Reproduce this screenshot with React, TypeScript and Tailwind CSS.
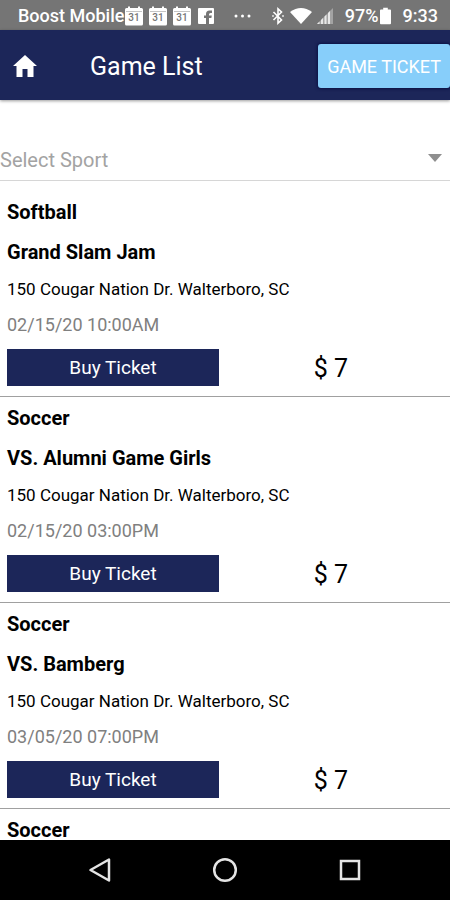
type Game = {
    sport: string;
    name?: string;
    address?: string;
    date?: string;
    price?: number;
};

const games: Game[] = [
    {
        sport: "Softball",
        name: "Grand Slam Jam",
        address: "150 Cougar Nation Dr. Walterboro, SC",
        date: "02/15/20 10:00AM",
        price: 7,
    },
    {
        sport: "Soccer",
        name: "VS. Alumni Game Girls",
        address: "150 Cougar Nation Dr. Walterboro, SC",
        date: "02/15/20 03:00PM",
        price: 7,
    },
    {
        sport: "Soccer",
        name: "VS. Bamberg",
        address: "150 Cougar Nation Dr. Walterboro, SC",
        date: "03/05/20 07:00PM",
        price: 7,
    },
    { sport: "Soccer" },
];

const CalendarIcon = () => (
    <svg width="18" height="20" viewBox="0 0 18 20" aria-hidden="true">
        <path
            fill="#fff"
            d="M1.5 2H3V.5h2V2h8V.5h2V2h1.5Q18 2 18 3.500V18q0 1.500-1.500 1.500h-15Q0 19.500 0 18V3.500Q0 2 1.500 2z"
        />
        <path stroke="#c4c4c4" strokeWidth="1" d="M1 5.500h16" />
        <text x="9" y="15" fontSize="10" textAnchor="middle" fill="#757575">
            31
        </text>
    </svg>
);

const StatusBar = () => (
    <div className="flex h-[30px] shrink-0 items-center bg-[#757575] pl-[18px] pr-3 pt-0.5 text-lg font-medium text-white">
        <span className="whitespace-nowrap">Boost Mobile</span>
        <div className="ml-px flex items-center gap-[6px]">
            <CalendarIcon />
            <CalendarIcon />
            <CalendarIcon />
            <svg className="ml-px" width="16" height="16" viewBox="0 0 16 16" aria-hidden="true">
                <rect width="16" height="16" rx="1" fill="#fff" />
                <path
                    fill="#757575"
                    d="M8 16V10H6V7.500h2V6q0-3.500 3.500-3.500H14V5h-1.500q-1.500 0-1.500 1.500v1h2.800L13.400 10H11v6z"
                />
            </svg>
        </div>
        <div className="ml-auto flex items-center">
            <svg width="18" height="4" viewBox="0 0 18 4" fill="#fff" aria-hidden="true">
                <circle cx="2" cy="2" r="1.500" />
                <circle cx="8.500" cy="2" r="1.500" />
                <circle cx="15" cy="2" r="1.500" />
            </svg>
            <svg
                className="ml-5"
                width="12"
                height="18"
                viewBox="0 0 12 18"
                fill="none"
                stroke="#fff"
                strokeWidth="1.600"
                aria-hidden="true"
            >
                <path d="M1.500 5l8 8L6 16.200V1.800L9.500 5l-8 8" />
                <path d="M.2 9h1.600M10.200 9h1.600" />
            </svg>
            <svg className="ml-1.5" width="22" height="16" viewBox="0 0 22 16" aria-hidden="true">
                <path fill="#fff" d="M0 4Q11-4 22 4L11 16z" />
            </svg>
            <svg className="ml-1" width="17" height="16" viewBox="0 0 17 16" aria-hidden="true">
                <path fill="#a3a3a3" d="M17 0v16H1z" />
                <path fill="#e6e6e6" d="M2 15l1.500-1.500V16H1zM5 12l2-2v6H5zM8.500 8.500l2-2V16h-2zM12 5l2-2v13h-2z" />
            </svg>
            <span className="ml-3">97%</span>
            <svg className="ml-px" width="11" height="18" viewBox="0 0 12 18" aria-hidden="true">
                <path fill="#fff" d="M3.500 0h5v2H11q1 0 1 1v14q0 1-1 1H1q-1 0-1-1V3q0-1 1-1h2.500z" />
            </svg>
            <span className="ml-3">9:33</span>
        </div>
    </div>
);

const Header = () => (
    <header className="z-10 flex h-[70px] shrink-0 items-center bg-[#1c2659] pt-px shadow-[0_1px_3px_rgba(0,0,0,0.4)]">
        <button type="button" aria-label="Home" className="ml-[13px]">
            <svg width="24" height="22" viewBox="0 0 24 22" aria-hidden="true">
                <path fill="#fff" d="M12 0l12 11h-3.500v11H14.500v-8h-5v8H3.500V11H0z" />
            </svg>
        </button>
        <h1 className="ml-[53px] pt-0.5 text-[25px] text-white">Game List</h1>
        <button
            type="button"
            className="ml-auto h-11 whitespace-nowrap rounded-[3px] bg-[#87cefa] px-[9px] pt-0.5 text-lg text-white shadow-[0_0_3px_1px_#0b1245]"
        >
            GAME TICKET
        </button>
    </header>
);

const SportSelect = () => (
    <div className="mt-10 flex h-[41px] shrink-0 items-center border-b border-[#d6d6d6]">
        <select
            aria-label="Select Sport"
            defaultValue=""
            className="h-full min-w-0 flex-1 appearance-none bg-transparent text-xl text-[#a3a3a3] outline-none"
        >
            <option value="">Select Sport</option>
            <option value="softball">Softball</option>
            <option value="soccer">Soccer</option>
        </select>
        <svg
            className="pointer-events-none mb-1 mr-2"
            width="14"
            height="8"
            viewBox="0 0 14 8"
            aria-hidden="true"
        >
            <path fill="#8f8f8f" d="M0 0h14L7 8z" />
        </svg>
    </div>
);

const GameItem = ({ game }: { game: Game }) => (
    <li className="border-b border-[#a0a0a0] px-[7px] pb-2.5 pt-[11px] text-black last:border-b-0 last:pb-0">
        <p className="text-xl font-bold leading-5">{game.sport}</p>
        {game.name && (
            <>
                <h2 className="mt-[18px] text-xl font-bold leading-6">{game.name}</h2>
                <p className="mt-[13px] text-[17px] leading-6">{game.address}</p>
                <p className="mt-3 text-lg leading-6 text-[#808080]">{game.date}</p>
                <div className="mt-3 flex items-center">
                    <button
                        type="button"
                        className="h-[37px] w-[47%] min-w-[212px] bg-[#1c2659] pt-0.5 text-[19px] text-white"
                    >
                        Buy Ticket
                    </button>
                    <span className="flex-1 pt-0.5 text-center text-[25px] leading-[35px]">
                        $ {game.price}
                    </span>
                </div>
            </>
        )}
    </li>
);

const NavBar = () => (
    <nav className="flex h-[60px] shrink-0 items-center justify-center gap-[100px] bg-black">
        <button type="button" aria-label="Back">
            <svg width="24" height="26" viewBox="0 0 24 26" fill="none" aria-hidden="true">
                <path stroke="#e4e4e4" strokeWidth="2.500" strokeLinejoin="round" d="M21 2.500v21L2.500 13z" />
            </svg>
        </button>
        <button type="button" aria-label="Home screen">
            <svg width="26" height="26" viewBox="0 0 26 26" fill="none" aria-hidden="true">
                <circle cx="13" cy="13" r="10.800" stroke="#e4e4e4" strokeWidth="2.500" />
            </svg>
        </button>
        <button type="button" aria-label="Recent apps">
            <svg width="24" height="24" viewBox="0 0 24 24" fill="none" aria-hidden="true">
                <rect x="3" y="3" width="18" height="18" stroke="#e4e4e4" strokeWidth="2.500" />
            </svg>
        </button>
    </nav>
);

const App = () => {
    return (
        <div className="flex h-screen flex-col overflow-hidden bg-white font-[Roboto,sans-serif]">
            <StatusBar />
            <Header />
            <main className="flex min-h-0 flex-1 flex-col">
                <SportSelect />
                <ul className="mt-2.5 min-h-0 flex-1 overflow-hidden">
                    {games.map((game, i) => (
                        <GameItem key={i} game={game} />
                    ))}
                </ul>
            </main>
            <NavBar />
        </div>
    );
};

export default App;
